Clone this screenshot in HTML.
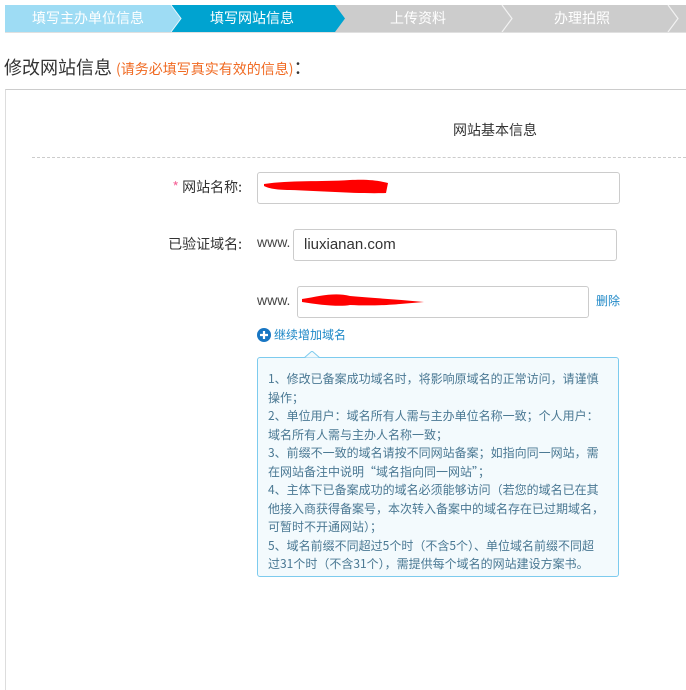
<!DOCTYPE html>
<html><head><meta charset="utf-8"><style>
body{margin:0;width:686px;height:586px;overflow:hidden;background:#fff;font-family:"Noto Sans CJK SC","Liberation Sans",sans-serif;position:relative}
.a{position:absolute}
.steps{left:5px;top:5px;width:681px;height:27px;background:#cccccc;border-bottom:1px solid #e0e0e0}
.st{top:5px;height:27px;line-height:27px;color:#fff;font-size:14px;text-align:center;width:140px}
.field{border:1px solid #ccc;border-radius:3px;background:#fff;box-sizing:border-box}
.lbl{font-size:14px;color:#333;text-align:right;width:120px;left:122px}
.tip{left:257px;top:357px;width:362px;height:220px;box-sizing:border-box;border:1px solid #7dcbee;border-radius:3px;background:#f3fafd;padding:12px 8px 0 10px;font-size:12px;line-height:18.5px;color:#4a7893}
</style></head><body>
<div class="a steps"></div>
<svg class="a" style="left:5px;top:5px" width="681" height="27">
<polygon points="0,0 166,0 176,13.5 166,27 0,27" fill="#9edcf4"/>
<polygon points="166,0 330,0 340,13.5 330,27 166,27 176,13.5" fill="#00a3d0"/>
<polyline points="166,0 176,13.5 166,27" fill="none" stroke="#e8f6fc" stroke-width="1"/>
<polyline points="497,0 507,13.5 497,27" fill="none" stroke="#f2f2f2" stroke-width="1.2"/>
<polyline points="663,0 673,13.5 663,27" fill="none" stroke="#f2f2f2" stroke-width="1.2"/>
</svg>
<div class="a st" style="left:18px">填写主办单位信息</div>
<div class="a st" style="left:182px">填写网站信息</div>
<div class="a st" style="left:348px">上传资料</div>
<div class="a st" style="left:512px">办理拍照</div>
<div class="a" style="left:4px;top:54px;font-size:18px;color:#333;white-space:nowrap">修改网站信息 <span style="font-size:14px;color:#f06a22">(请务必填写真实有效的信息)</span>：</div>
<div class="a" style="left:5px;top:89px;width:681px;height:600px;border-top:1px solid #ccc;border-left:1px solid #ddd"></div>
<div class="a" style="left:453px;top:120px;font-size:14px;color:#333">网站基本信息</div>
<div class="a" style="left:32px;top:157px;width:654px;border-top:1px dashed #ccc"></div>
<div class="a lbl" style="top:177px"><span style="color:#f5679a">*</span> 网站名称:</div>
<div class="a field" style="left:257px;top:172px;width:363px;height:32px"></div>
<svg class="a" style="left:260px;top:176px" width="140" height="22"><path d="M4,8 C30,4 60,6 90,4 C110,3 120,5 128,7 L126,17 C100,18 60,15 30,14 C15,14 8,12 4,10Z" fill="#f00"/></svg>
<div class="a lbl" style="top:234px">已验证域名:</div>
<div class="a" style="left:257px;top:234px;font-size:14px;color:#444;font-family:'Liberation Sans',sans-serif">www.</div>
<div class="a field" style="left:293px;top:229px;width:324px;height:32px;padding:6px 0 0 10px;font-size:15px;color:#333;font-family:'Liberation Sans',sans-serif">liuxianan.com</div>
<div class="a" style="left:257px;top:292px;font-size:14px;color:#444;font-family:'Liberation Sans',sans-serif">www.</div>
<div class="a field" style="left:297px;top:286px;width:292px;height:32px"></div>
<svg class="a" style="left:300px;top:290px" width="130" height="24"><path d="M2,9 C20,6 35,2 50,6 C70,8 95,9 124,12 L100,14 C90,15 70,16 50,15 C40,17 20,15 2,12Z" fill="#f00"/></svg>
<div class="a" style="left:596px;top:292px;font-size:12px;color:#1e88c7">删除</div>
<svg class="a" style="left:257px;top:328px" width="14" height="14"><circle cx="7" cy="7" r="7" fill="#1876c3"/><path d="M3,7H11M7,3V11" stroke="#fff" stroke-width="2.2"/></svg>
<div class="a" style="left:274px;top:326px;font-size:12px;color:#1e88c7">继续增加域名</div>
<div class="a tip">1、修改已备案成功域名时，将影响原域名的正常访问，请谨慎操作；<br>2、单位用户：域名所有人需与主办单位名称一致；个人用户：域名所有人需与主办人名称一致；<br>3、前缀不一致的域名请按不同网站备案；如指向同一网站，需在网站备注中说明“域名指向同一网站”；<br>4、主体下已备案成功的域名必须能够访问（若您的域名已在其他接入商获得备案号，本次转入备案中的域名存在已过期域名，可暂时不开通网站）；<br>5、域名前缀不同超过5个时（不含5个）、单位域名前缀不同超<br>过31个时（不含31个），需提供每个域名的网站建设方案书。</div>
<svg class="a" style="left:304px;top:351px" width="16" height="8"><polygon points="0,7 8,0 16,7" fill="#f3fafd" stroke="#7dcbee"/><rect x="0" y="7" width="16" height="2" fill="#f3fafd"/></svg>
</body></html>
